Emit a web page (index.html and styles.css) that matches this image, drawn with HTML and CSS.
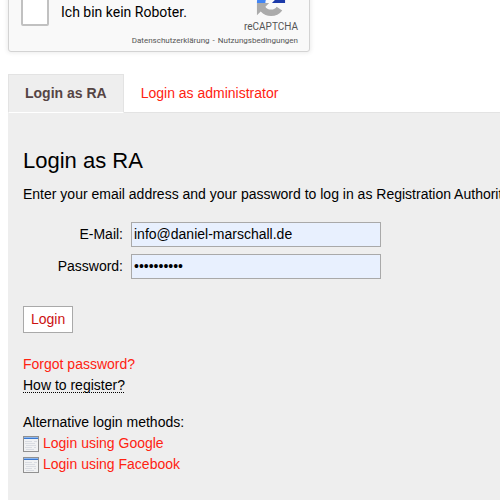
FILE: index.html
```html
<!DOCTYPE html>
<html lang="en">
<head>
<meta charset="utf-8">
<title>Login</title>
<link rel="stylesheet" href="styles.css">
</head>
<body>
<section class="captcha">
  <input type="checkbox" id="robot" class="captcha-check">
  <label for="robot" class="captcha-label">Ich bin kein Roboter.</label>
  <div class="captcha-brand">
    <svg class="captcha-logo" viewBox="0 0 32 32" aria-hidden="true">
      <path fill="#1c3aa9" d="M31 16V3l-4 4A14 14 0 0 0 16 1v8c3 0 5 1 6 3l-5 5h14z"/>
      <path fill="#4285f4" d="M16 1H3l4 4A14 14 0 0 0 1 16v1h9c0-3 1-5 3-6l3 3z"/>
      <path fill="#ababab" d="M1 17v13l4-4c3 3 7 5 11 5 5 0 9-2 12-6l-6-4c-1 2-3 3-6 3s-5-1-6-3l4-4z"/>
    </svg>
    <span class="captcha-name">reCAPTCHA</span>
  </div>
  <div class="captcha-terms"><a href="#privacy">Datenschutzerklärung</a> <span class="dash">-</span> <a href="#terms">Nutzungsbedingungen</a></div>
</section>
<nav class="tabs">
  <a href="#ra" class="tab active">Login as RA</a>
  <a href="#admin" class="tab">Login as administrator</a>
</nav>
<main class="panel">
  <h2>Login as RA</h2>
  <p class="intro">Enter your email address and your password to log in as Registration Authority.</p>
  <form>
    <div class="fields">
      <label for="email">E-Mail:</label>
      <input type="text" id="email" value="info@daniel-marschall.de">
      <label for="password">Password:</label>
      <input type="password" id="password" value="secret1234">
    </div>
    <button type="button">Login</button>
  </form>
  <p class="links"><a href="#forgot">Forgot password?</a><br><abbr>How to register?</abbr></p>
  <div class="methods">
    <p>Alternative login methods:</p>
    <a href="#google"><svg class="icon" viewBox="0 0 16 16" aria-hidden="true"><path fill="#919191" d="M0 0h16v16H0z"/><path fill="#f1f2f3" d="M1 1h14v14H1z"/><path fill="#3978d2" d="M1 1h14v2H1z"/><path fill="#8db7ee" d="M1 1h14v1H1z"/><path stroke="#d9dce2" d="M2 5.500h7m2 0h3M2 7.500h10M3 9.500h10M2 11.500h7m2 0h2M3 13.500h8"/></svg>Login using Google</a>
    <a href="#facebook"><svg class="icon" viewBox="0 0 16 16" aria-hidden="true"><path fill="#919191" d="M0 0h16v16H0z"/><path fill="#f1f2f3" d="M1 1h14v14H1z"/><path fill="#3978d2" d="M1 1h14v2H1z"/><path fill="#8db7ee" d="M1 1h14v1H1z"/><path stroke="#d9dce2" d="M2 5.500h7m2 0h3M2 7.500h10M3 9.500h10M2 11.500h7m2 0h2M3 13.500h8"/></svg>Login using Facebook</a>
  </div>
</main>
</body>
</html>
```
FILE: styles.css
```css
* { box-sizing: border-box; }
html { background: #fff; }
body {
  display: flex;
  flex-direction: column;
  min-height: 100vh;
  margin: 0;
  padding-left: 8px;
  overflow: hidden;
  font: 14px/21px "Liberation Sans", Arial, sans-serif;
  color: #000;
}
a { color: #f21; text-decoration: none; }
p { margin: 0; }

.captcha {
  display: grid;
  grid-template-columns: 28px 1fr auto;
  grid-template-rows: 60px auto;
  column-gap: 12px;
  width: 302px;
  margin-top: -26px;
  padding: 0 11px 4px 12px;
  border: 1px solid #d3d3d3;
  border-radius: 3px;
  background: #f9f9f9;
  box-shadow: 0 0 4px 1px rgba(0, 0, 0, .08);
  font-family: Roboto, sans-serif;
}
.captcha-check {
  appearance: none;
  align-self: center;
  width: 28px;
  height: 28px;
  margin: 14px 0 0;
  border: 2px solid #c1c1c1;
  border-radius: 2px;
  background: #fff;
}
.captcha-label {
  align-self: center;
  margin-top: 14px;
  line-height: 20px;
}
.captcha-brand {
  display: flex;
  flex-direction: column;
  align-items: center;
  padding-top: 12px;
}
.captcha-logo { width: 32px; height: 32px; }
.captcha-name { font-size: 10px; line-height: 16px; padding-top: 2px; color: #555; }
.captcha-terms {
  grid-column: 1 / -1;
  font-size: 8px;
  line-height: 12px;
  text-align: right;
  color: #555;
}
.captcha-terms a { color: #555; }
.dash { margin: 0 1px; }

.tabs {
  display: flex;
  margin-top: 22px;
  border-bottom: 1px solid #e3e3e3;
}
.tab {
  padding: 8px 16px;
  border: 1px solid transparent;
  border-bottom: 0;
}
.tab.active {
  margin-bottom: -1px;
  border: 1px solid #e3e3e3;
  border-bottom-color: #fff;
  background: #eee;
  color: #544;
  font-weight: bold;
}

.panel {
  flex: 1;
  padding: 33px 15px 25px;
  background: #eee;
  white-space: nowrap;
}
h2 { margin: 0; font-size: 22px; line-height: 30px; font-weight: normal; }
.intro { margin-top: 8px; }
.fields {
  display: grid;
  grid-template-columns: 100px 250px;
  gap: 7px 8px;
  margin: 17px 0 27px;
}
.fields label { line-height: 25px; text-align: right; }
.fields input {
  height: 25px;
  min-width: 0;
  padding: 0 2px 1px;
  border: 1px solid #a9a9a9;
  border-radius: 0;
  background: #e8f0fe;
  color: #000;
  font: inherit;
}
button {
  display: block;
  height: 27px;
  padding: 0 7px;
  border: 1px solid #a9a9a9;
  background: #fff;
  color: #c11;
  font: inherit;
}
.links { margin-top: 21px; }
abbr {
  text-decoration: underline dotted 1px;
  text-decoration-skip-ink: none;
  text-underline-offset: 2px;
}
.methods { margin-top: 16px; }
.methods a { display: flex; align-items: center; gap: 4px; }
.icon { width: 16px; height: 16px; }
```
